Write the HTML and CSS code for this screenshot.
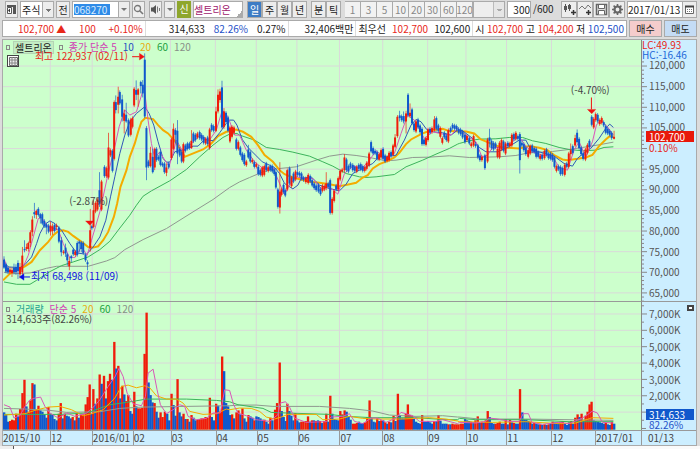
FILE: index.html
```html
<!DOCTYPE html>
<html lang="ko">
<head>
    <meta charset="UTF-8">
    <meta name="viewport" content="width=device-width, initial-scale=1.0">
    <title>셀트리온 차트</title>
    <link rel="stylesheet" href="styles.css">
</head>
<body>

<form class="toolbar">
    <button type="button" class="btn icon" aria-label="패널">
        <svg width="11" height="11" viewBox="0 0 11 11"><path d="M1 1h9v9H7V3H1z" fill="#555"/><path d="M1.500 3.500h4v6h-4z" fill="#fff" stroke="#555"/><path d="M4 4.500v4L2 6.500z" fill="#333"/></svg>
    </button>
    <select class="box market" aria-label="시장"><option>주식</option></select>
    <button type="button" class="btn prev">전</button>
    <span class="combo">
        <input type="text" class="code" aria-label="종목코드" value="068270">
        <button type="button" class="arrow" aria-label="목록"></button>
    </span>
    <button type="button" class="btn icon" aria-label="검색">
        <svg width="11" height="11" viewBox="0 0 11 11"><circle cx="4.500" cy="4.500" r="3" fill="none" stroke="#777" stroke-width="1.300"/><path d="M7 7l3 3" stroke="#777" stroke-width="1.600"/></svg>
    </button>
    <button type="button" class="btn icon sound" aria-label="소리">
        <svg width="11" height="11" viewBox="0 0 11 11"><path d="M1 3.500h2L6 1v9L3 7.500H1z" fill="#555"/><path d="M7.500 2.500v6M9.500 4v3" stroke="#777"/></svg>
    </button>
    <button type="button" class="arrow" aria-label="소리 설정"></button>
    <span class="badge">신</span>
    <input type="text" class="box name" aria-label="종목명" value="셀트리온">
    <span class="group">
        <button type="button" class="btn on">일</button>
        <button type="button" class="btn">주</button>
        <button type="button" class="btn">월</button>
        <button type="button" class="btn">년</button>
    </span>
    <span class="group">
        <button type="button" class="btn">분</button>
        <button type="button" class="btn">틱</button>
    </span>
    <span class="group minutes">
        <button type="button" class="btn">1</button>
        <button type="button" class="btn">3</button>
        <button type="button" class="btn">5</button>
        <button type="button" class="btn">10</button>
        <button type="button" class="btn">20</button>
        <button type="button" class="btn">30</button>
        <button type="button" class="btn">60</button>
        <button type="button" class="btn">120</button>
        <select class="box unit" aria-label="분 단위" disabled><option></option></select>
    </span>
    <input type="text" class="box count" id="count" aria-label="봉 개수" value="300">
    <label class="total" for="count">/600</label>
    <span class="group tools">
        <button type="button" class="btn" aria-label="봉 추가">
            <svg width="13" height="13" viewBox="0 0 13 13"><path d="M2.500 1v8M6.500 1v7" stroke="#555"/><path d="M1 3h3v4H1zM5 2h3v4H5z" fill="#555"/><path d="M8 9.500h5M10.500 7v5" stroke="#333" stroke-width="1.500"/></svg>
        </button>
        <button type="button" class="btn" aria-label="지표 추가">
            <svg width="13" height="13" viewBox="0 0 13 13"><path d="M0 6l3-3 3 3 3-4 3 3" fill="none" stroke="#777"/><path d="M7 9.500h5M9.500 7v5" stroke="#333" stroke-width="1.500"/></svg>
        </button>
        <button type="button" class="btn" aria-label="저장">
            <svg width="13" height="13" viewBox="0 0 13 13"><path d="M1.500 1.500h10v10h-10z" fill="#ddd" stroke="#666" stroke-width="1.500"/><path d="M3.500 2v3.500h6V2M3.500 11.500v-4h6v4" fill="#fff" stroke="#666"/></svg>
        </button>
        <button type="button" class="btn" aria-label="설정">
            <svg width="13" height="13" viewBox="0 0 13 13"><circle cx="6.500" cy="6.500" r="3" fill="none" stroke="#666" stroke-width="2.200"/><path d="M6.500 1v2M6.500 10v2M1 6.500h2M10 6.500h2M2.600 2.600L4 4M9 9l1.400 1.400M2.600 10.400L4 9M9 4l1.400-1.400" stroke="#666" stroke-width="1.600"/></svg>
        </button>
    </span>
    <span class="combo date">
        <input type="text" aria-label="기준일" value="2017/01/13">
        <button type="button" class="btn" aria-label="달력">
            <svg width="11" height="11" viewBox="0 0 11 11"><path d="M1.500 2.500h8v7h-8z" fill="#fff" stroke="#666"/><path d="M1 2.500h9" stroke="#444" stroke-width="2"/><path d="M3 5.500h5M3 7.500h5" stroke="#777" stroke-dasharray="1 1"/></svg>
        </button>
    </span>
</form>

<div class="quote">
    <div class="cells">
        <div class="cell c1"><span class="up">102,700 ▲</span><span class="up">100</span><span class="up">+0.10%</span></div>
        <div class="cell c2"><span>314,633</span><span class="down">82.26%</span><span>0.27%</span></div>
        <div class="cell c3"><span>32,406백만</span></div>
        <div class="cell"><span>최우선</span><span class="up">102,700</span><span>102,600</span></div>
        <div class="cell"><span>시</span><span class="up">102,700</span><span>고</span><span class="up">104,200</span><span>저</span><span class="down">102,500</span></div>
    </div>
    <button type="button" class="order buy">매수</button>
    <button type="button" class="order sell">매도</button>
</div>

<main class="chart">
    <section class="plot">
        <svg id="price" viewBox="9 120 1917 783" preserveAspectRatio="none"></svg>
        <div class="legend">
            <i class="mark"></i><b class="title">셀트리온</b><i class="mark"></i>
            <span class="t5">종가 단순 5</span><span class="t10">10</span><span class="t20">20</span><span class="t60">60</span><span class="t120">120</span>
        </div>
        <button type="button" class="sheet" aria-label="표 보기">
            <svg width="9" height="9" viewBox="0 0 9 9"><path d="M.5.5h8v8h-8z" fill="#eee" stroke="#666"/><path d="M3 0v9M6 0v9M0 3h9M0 6h9" stroke="#888"/></svg>
        </button>
        <span class="note high">최고 122,937 (02/11)</span>
        <span class="note low">최저 68,498 (11/09)</span>
        <span class="note gap1">(-2.87%)</span>
        <span class="note gap2">(-4.70%)</span>
    </section>
    <aside class="axis">
        <svg id="priceTicks" viewBox="0 120 6 783" preserveAspectRatio="none"></svg>
        <ol class="scale price-scale">
            <li>120,000</li><li>115,000</li><li>110,000</li><li>105,000</li><li></li><li>95,000</li>
            <li>90,000</li><li>85,000</li><li>80,000</li><li>75,000</li><li>70,000</li><li>65,000</li>
        </ol>
        <div class="range"><span class="up">LC:49.93</span><span class="hc">HC:-16.46</span></div>
        <div class="tag now"><b>102,700</b><span>0.10%</span></div>
    </aside>

    <section class="plot volume">
        <svg id="volume" viewBox="9 906 1917 384" preserveAspectRatio="none"></svg>
        <div class="legend">
            <i class="mark"></i><span class="vol">거래량</span><span class="t5">단순 5</span><span class="t20">20</span><span class="t60">60</span><span class="t120">120</span>
        </div>
        <span class="note amount">314,633주(82.26%)</span>
    </section>
    <aside class="axis volume">
        <svg id="volumeTicks" viewBox="0 906 6 384" preserveAspectRatio="none"></svg>
        <ol class="scale volume-scale">
            <li>7,000K</li><li>6,000K</li><li>5,000K</li><li>4,000K</li><li>3,000K</li><li>2,000K</li><li>1,000K</li>
        </ol>
        <button type="button" class="max" aria-label="최대화"></button>
        <div class="tag vol-now"><b>314,633</b><span>82.26%</span></div>
    </aside>

    <ol class="months">
        <li>2015/10</li><li>12</li><li>2016/01</li><li>02</li><li>03</li><li>04</li><li>05</li><li>06</li>
        <li>07</li><li>08</li><li>09</li><li>10</li><li>11</li><li>12</li><li>2017/01</li>
    </ol>
    <div class="today">01/13</div>
</main>

<footer class="tabs"><div class="tab"></div></footer>

<script src="chart.js"></script>
</body>
</html>
```

FILE: styles.css
```css
* {
    box-sizing: border-box;
}

body {
    margin: 0;
    height: 100vh;
    display: flex;
    flex-direction: column;
    background-color: #dcdcdc;
    color: #222;
    font-family: "Noto Sans CJK KR", sans-serif;
    font-size: 10px;
    line-height: 12px;
}

button, input, select {
    margin: 0;
    padding: 0;
    border: 1px solid #aaa;
    border-radius: 0;
    background-color: #fff;
    color: #222;
    font: inherit;
    line-height: 12px;
}

ol {
    list-style: none;
    margin: 0;
    padding: 0;
}

svg {
    display: block;
}

.up {
    color: #e8281a;
}

.down {
    color: #2450c8;
}

/* toolbar */
.toolbar {
    display: flex;
    align-items: stretch;
    height: 18px;
    padding: 1px 3px 0 5px;
    gap: 2px;
}

.btn {
    display: flex;
    align-items: center;
    justify-content: center;
    background-color: #ededed;
}

.icon {
    width: 13px;
}

.sound {
    margin-left: 2px;
}

.box {
    background-color: #fff;
}

.market {
    width: 34px;
    appearance: none;
    padding-left: 1px;
    background: linear-gradient(#777, #777) 25px 7px / 5px 1px no-repeat, linear-gradient(#777, #777) 26px 8px / 3px 1px no-repeat, linear-gradient(#777, #777) 27px 9px / 1px 1px no-repeat, linear-gradient(90deg, #fff 21px, #aaa 21px, #aaa 22px, #ededed 22px);
}

.prev {
    width: 14px;
}

.combo {
    display: flex;
    border: 1px solid #aaa;
    background-color: #fff;
}

.combo input {
    border: 0;
    min-width: 0;
}

.code {
    width: 36px;
    margin: 2px 8px 2px 1px;
    background-color: #2f8be8;
    color: #d8ecff;
}

.arrow {
    width: 11px;
    border-width: 1px;
    background-color: #ededed;
    display: flex;
    align-items: center;
    justify-content: center;
}

.arrow::after {
    content: "";
    border: 3px solid transparent;
    border-top-color: #777;
    border-bottom: 0;
}

.combo .arrow {
    border-width: 0 0 0 1px;
}

.badge {
    width: 14px;
    background-color: #8ea62c;
    color: #fff;
    text-align: center;
    line-height: 16px;
}

.name {
    flex: 1;
    min-width: 40px;
    color: #a0206e;
    background: linear-gradient(135deg, transparent 50%, #aaa 50%) right bottom / 6px 6px no-repeat, #fff;
}

.group {
    display: flex;
    margin-left: 2px;
}

.group .btn {
    width: 15px;
}

.group .on {
    background-color: #3d7cc4;
    color: #fff;
}

.minutes .btn, .tools .btn {
    width: 16px;
}

.minutes .btn {
    color: #888;
    background-color: #f2f2f2;
    border-left-width: 0;
    overflow: hidden;
}

.unit {
    width: 32px;
    appearance: none;
    opacity: 1;
    background: linear-gradient(#aaa, #aaa) 23px 7px / 5px 1px no-repeat, linear-gradient(#aaa, #aaa) 24px 8px / 3px 1px no-repeat, linear-gradient(90deg, #eee 19px, #bbb 19px, #bbb 20px, #e6e6e6 20px);
}

.count {
    width: 24px;
    text-align: right;
}

.total {
    width: 24px;
    line-height: 16px;
}

.date input {
    width: 54px;
}

.date .btn {
    width: 14px;
    border-width: 0 0 0 1px;
}

/* quote line */
.quote {
    display: flex;
    height: 19px;
    margin: 1px 3px 1px 2px;
    padding: 1px 0;
    gap: 2px;
}

.cells {
    flex: 1;
    display: grid;
    grid-template-columns: 142fr 143fr 68fr 117fr 154fr;
    background-color: #fff;
    border: 1px solid #aaa;
}

.cell {
    display: flex;
    align-items: center;
    justify-content: space-between;
    white-space: nowrap;
    border-left: 1px solid #ddd;
    padding: 0 2px;
    min-width: 0;
}

.c1 {
    border-left: 0;
    padding-left: 15px;
}

.c2 {
    padding-left: 23px;
}

.c3 {
    justify-content: flex-end;
}

.order {
    width: 33px;
}

.buy {
    background-color: #f5cccc;
}

.sell {
    background-color: #c4dcf5;
}

/* chart */
.chart {
    flex: 1;
    min-height: 0;
    display: grid;
    grid-template-columns: minmax(0, 1fr) 55px;
    grid-template-rows: minmax(0, 262fr) minmax(0, 129fr) 15px;
    margin: 0 3px 0 2px;
    border: 1px solid #aaa;
}

.plot {
    position: relative;
    overflow: hidden;
    background-color: #ccffcc;
}

.plot > svg {
    width: 100%;
    height: 100%;
}

.volume {
    border-top: 1px solid #999;
}

.axis {
    position: relative;
    display: flex;
    gap: 1px;
    background-color: #cceeff;
    border-left: 1px solid #888;
    color: #555;
}

.axis > svg {
    width: 6px;
    height: 100%;
    stroke: #888;
}

.scale {
    flex: 1;
    display: flex;
    flex-direction: column;
}

.scale li {
    flex: 1;
    min-height: 0;
    display: flex;
    align-items: center;
}

.price-scale {
    margin: 15px 0 -2px;
}

.volume-scale {
    margin: 3px 0 9px;
}

.grid {
    stroke: #d9d9d9;
}

.grid, .line {
    fill: none;
    vector-effect: non-scaling-stroke;
}

.r {
    fill: #f01c0a;
}

.b {
    fill: #1058cc;
}

.m5 {
    stroke: #d858b8;
}

.m10 {
    stroke: #3058b8;
}

.m20 {
    stroke: #f4ac00;
    stroke-width: 2px;
}

.thin {
    stroke-width: 1px;
}

.m60 {
    stroke: #3cb45c;
}

.m120 {
    stroke: #909890;
}

.arrows {
    fill: #f01010;
    stroke: #f01010;
}

.arrows .low-arrow {
    fill: #0808e8;
    stroke: #0808e8;
}

.legend {
    position: absolute;
    top: 0;
    left: 3px;
    display: flex;
    align-items: center;
    gap: 6px;
    height: 14px;
    white-space: nowrap;
}

.mark {
    width: 4px;
    height: 5px;
    border: 1px solid #888;
}

.title {
    font-weight: normal;
    background-color: #c4ecc4;
    border: 1px solid #b4d4b4;
    padding: 0 1px;
    margin: 0 -1px 0 -3px;
    line-height: 11px;
}

.t5 {
    color: #d040b4;
}

.t10 {
    color: #2450c0;
}

.t20 {
    color: #e8ac10;
}

.t60 {
    color: #1ca040;
}

.t120 {
    color: #889088;
}

.vol {
    color: #28a090;
}

.sheet {
    position: absolute;
    top: 15px;
    left: 4px;
    width: 12px;
    height: 12px;
    display: flex;
    align-items: center;
    justify-content: center;
    border-color: #444;
}

.note {
    position: absolute;
    white-space: nowrap;
    color: #444;
}

.high {
    left: 5%;
    top: 4%;
    color: #e8281a;
}

.low {
    left: 4.4%;
    top: 88%;
    color: #1010e0;
}

.gap1 {
    left: 10.4%;
    top: 59.5%;
}

.gap2 {
    left: 89%;
    top: 17%;
}

.amount {
    top: 11px;
    left: 3px;
}

.range {
    position: absolute;
    top: 0;
    left: 0;
    display: flex;
    flex-direction: column;
    line-height: 10px;
    background-color: #cceeff;
}

.hc {
    color: #2068d8;
}

.tag {
    position: absolute;
    left: 4px;
    right: 2px;
    display: flex;
    flex-direction: column;
    line-height: 11px;
}

.tag b {
    font-weight: normal;
    color: #fff;
    padding-left: 3px;
}

.tag span {
    padding-left: 3px;
}

.now {
    top: 35%;
    color: #e8281a;
}

.now b {
    background-color: #e8180a;
}

.vol-now {
    bottom: 0;
    color: #2450c8;
}

.vol-now b {
    background-color: #1058cc;
}

.vol-now span {
    background-color: #cceeff;
    line-height: 10px;
}

.max {
    position: absolute;
    top: 3px;
    right: 2px;
    width: 7px;
    height: 6px;
    border: 2px solid #444;
}

.months {
    display: grid;
    grid-template-columns: 47fr 42fr 41fr 38fr 45fr 41fr 41fr 42fr 43fr 45fr 39fr 40fr 45fr 44fr 46fr;
}

.months li, .today {
    min-width: 0;
    background-color: #cceeff;
    border-left: 1px solid #999;
    border-top: 1px solid #999;
    line-height: 13px;
    white-space: nowrap;
    color: #444;
}

.months li:first-child {
    border-left: 0;
}

.today {
    padding-left: 6px;
}

/* top edge of the tab strip under the chart */
.tabs {
    height: 3px;
    padding-left: 13px;
    background-color: #eee;
}

.tab {
    height: 3px;
    background-color: #fafafa;
    border-left: 1px solid #555;
}
```

FILE: chart.js
```js
const NS = 'http://www.w3.org/2000/svg';

// colour, x, body top, body bottom [, high, low], grouped by the origin of each stretch
const candles = [
    [0, 240, `b 12 538 562 528 566,b 18 552 574,b 24 562 576,r 30 568 576 560 582,r 36 570 578 562 590,b 42 562 576 550 582,
    b 48 560 576 552 584,b 54 548 572 540 596,r 60 560 582 548 594,r 67 526 576 500 585,b 74 506 510 480 516,r 80 500 506 490 512,
    r 85 488 506 484 514,r 91 456 488 450 500,r 97 418 456 408 468,b 103 396 402 368 414,r 109 392 404 388 416,b 115 386 404,
    b 121 402 414 398 430,b 127 402 430,b 133 422 438,b 139 432 442 428 462,b 146 436 454,r 152 436 454 424 466,r 158 438 452 430 464,
    b 164 434 452,r 170 436 440 430 450,b 177 442 484,b 184 480 516 470 528,r 191 514 518,b 197 502 520 490 530,b 202 522 540 518 556,
    r 208 542 558 530 570,b 214 528 534 524 545,b 220 508 522,r 226 514 524,b 232 488 524,b 238 484 490 480 516,b 244 486 506 482 516,
    b 250 488 518,b 257 524 540,b 263 546 552 540 570,r 271 450 504 386 514,b 276 438 444,r 281 390 440 360 444,r 287 368 394,
    r 293 358 388,b 299 330 372 276 380,r 305 304 388,b 314 260 288,r 320 264 288,r 326 202 292 158 298,r 332 210 226,b 338 212 272,
    r 343 66 236,b 348 66 90 46 100,r 355 50 74 20 100,b 360 36 70,b 367 58 110 44 124,r 373 100 122 88 160,b 379 104 124 68 128,
    b 386 120 166,r 393 118 164,r 398 114 140,r 403 26 76,b 409 30 44 1 60,r 415 28 44 24 80,b 423 6 18 2 40,b 429 14 40 0 52,
    b 435 -61 109 -80 114,b 440 144 262 138 300,b 446 244 258,r 452 218 258 200 262,b 459 230 276 206 280,r 465 206 262 202 270,
    b 470 206 240,b 476 230 238,b 482 216 254,b 488 250 256,b 494 250 276,r 500 262 278 250 288,b 507 250 262,r 515 178 234,
    r 521 146 206 130 210,b 527 150 164 144 190,b 533 152 220 120 252,b 540 206 226,b 546 216 244,r 551 192 244,b 557 196 212,
    b 563 190 206,b 569 190 204,r 575 182 204 150 206,b 581 160 184,b 587 164 180,r 593 160 172,b 600 156 174,b 606 164 178,
    b 612 170 188,r 618 176 190,b 624 172 192,r 630 148 204,b 636 134 150,b 642 138 152,r 649 94 152 80 156,r 655 44 94 28 100,
    r 661 34 60 26 68,b 667 22 142 2 146,r 673 94 140 84 146,b 679 98 126,b 685 112 152,r 691 142 184,r 697 140 170,r 703 142 158`],
    [690, 180, `b 20 238 266,r 26 246 266,b 32 262 284,b 38 280 300,b 44 284 312,r 50 304 315,b 56 268 292 254 296,b 62 276 304,
    r 68 300 306,b 74 306 320,r 80 312 320,b 86 320 342,b 92 330 344,r 98 322 346,r 104 318 344,b 110 310 330,r 116 322 332,
    b 122 318 330,b 128 318 334,b 134 328 342,b 139 336 382,b 145 388 440,r 151 394 442 306 460,r 156 388 404,b 162 374 396,
    b 167 390 406,r 173 330 388,b 180 324 370,r 186 352 378,b 192 340 364,r 198 334 358,b 204 336 344 312 350,b 210 338 346,
    b 216 340 356,b 222 352 360,r 229 354 366,r 236 344 368,b 242 348 364,b 248 360 376,b 254 370 384,b 260 376 390,b 267 374 394,
    b 273 386 402,r 279 376 392,r 285 378 388,r 290 370 384 336 390,b 296 370 380,b 302 360 458,r 308 416 458,r 314 392 422,
    b 320 376 388,r 326 354 388,r 332 332 358,r 338 328 334,r 345 292 330 282 336,b 351 298 330,b 357 318 334,b 363 310 322,
    b 370 314 330,b 376 320 332,r 382 320 334,b 388 314 326,b 394 312 328,b 400 318 332,r 406 322 332,r 412 308 326,r 419 280 316,
    b 425 246 274,b 431 264 280,b 437 272 280,b 443 276 296,r 449 282 298,r 455 270 292,b 461 266 296,b 467 286 304,r 473 290 302,
    r 479 278 300,b 485 276 288,r 491 256 284,r 497 232 260 222 264,r 504 170 228,b 511 166 174 152 184,b 517 168 180,
    b 523 168 184 154 190,r 530 160 184 152 220,b 536 104 166,r 542 158 168 130 174,b 548 148 190,b 554 190 210,r 560 184 214,
    b 566 178 202,b 572 196 216,b 578 206 252,b 584 238 252,r 590 234 254,r 596 208 240,b 602 206 218,r 608 204 216,
    r 615 178 210 168 214,b 621 174 206,b 627 196 212,r 633 204 230,r 639 234 248,b 645 218 232,b 651 226 240,r 657 210 244,
    b 664 204 214,b 670 194 204,b 676 196 206,b 682 198 208,b 688 206 218`],
    [1380, 180, `b 4 208 222,b 10 214 232,b 17 224 246,r 23 228 240,b 30 234 250,r 36 250 258,r 43 228 256,b 49 252 258,b 56 256 292,
    b 62 286 300,r 68 290 300,b 77 286 324,r 85 238 304,b 91 232 242 206 262,b 97 242 264,b 103 248 268,b 109 250 262,r 115 266 290,
    r 121 248 292,r 127 240 268,b 133 244 272,r 139 250 280,b 146 248 258,r 152 250 258,r 158 224 256,b 164 222 238,r 170 218 236,
    b 176 228 236,b 182 222 300 216 340,b 188 248 256,b 194 252 270,b 200 262 282,r 207 270 290,r 213 258 280,b 219 256 274,
    b 225 264 276,b 231 266 290,b 237 276 290,r 243 286 296,b 249 284 296,r 256 272 294,b 262 268 284,b 268 280 294,b 274 280 296,
    b 280 284 300,b 286 292 320,r 292 318 332,b 298 318 328,b 304 320 342,b 310 324 342,r 317 314 344,b 323 310 320,r 329 280 320,
    r 335 270 282 250 300,b 341 258 278,r 348 234 256 224 260,b 354 218 246 208 250,b 360 236 264,b 366 262 282,b 372 280 296,
    r 379 268 298,r 385 254 278,b 391 242 260,b 398 170 194,r 404 176 202,r 410 162 180,b 416 164 184,r 422 180 192,r 428 174 188,
    b 434 186 196,b 440 198 218,b 446 206 220,b 452 212 224,b 458 218 234,r 465 230 236 212 238`]
];

// colour, x, bar top
const volumes = [
    [0, 870, `b 12 368,b 18 376,b 24 396,r 30 394,r 36 390,r 42 392,r 48 372,b 54 378,r 60 358,r 67 310,r 73 270,b 79 350,r 85 366,
    r 91 332,r 97 280,b 103 284,r 109 360,r 115 348,b 121 362,b 127 366,b 133 374,b 139 384,r 145 352,b 151 372,b 157 374,b 163 388,
    b 170 392,r 176 372,r 182 340,b 188 386,r 194 372,b 200 378,b 206 380,b 212 386,r 218 382,b 224 392,r 230 370,b 236 384,r 243 376,
    r 249 374,r 257 344,r 263 322,r 269 284,b 275 372,r 280 298,b 286 342,r 292 326,r 299 254,b 305 282,r 312 258,b 318 326,r 324 274,
    r 330 252,b 336 270,r 343 156,b 349 236,r 355 228,b 361 326,r 367 288,b 373 314,r 379 334,r 385 316,b 391 364,b 397 372,r 403 306,
    b 409 350,r 415 356,r 421 356,r 427 354,r 434 192,r 440 68,b 446 278,b 452 316,b 458 338,r 464 340,b 470 366,b 476 384,r 482 368,
    r 488 382,r 495 366,b 502 372,b 508 392,r 515 312,b 521 346,b 527 378,r 533 268,b 539 368,b 545 380,r 551 372,b 557 388,r 563 388,
    b 569 396,r 575 376,b 581 384,b 587 392,r 593 390,r 599 388,r 605 386,r 611 386,r 617 382,r 623 384,r 630 324,b 636 382,b 642 392,
    r 649 342,b 655 348,r 661 366,r 667 200,b 673 244,b 679 340,b 685 350,b 691 376,r 697 374,b 703 386`],
    [690, 870, `r 20 368,r 26 362,b 32 374,r 38 356,b 44 386,b 50 396,r 56 376,b 62 380,b 68 384,r 74 392,b 80 380,b 86 382,b 92 386,
    b 98 390,r 104 390,b 110 396,b 116 402,r 122 384,b 128 392,r 136 360,r 142 340,r 150 218,b 156 364,b 162 382,b 168 394,r 173 342,
    b 179 364,b 185 378,b 191 392,r 197 370,b 203 392,b 209 398,r 215 396,r 221 396,r 228 394,r 235 380,b 241 396,r 247 392,b 253 392,
    r 259 394,b 265 392,r 271 394,b 277 400,r 284 394,r 290 372,b 296 396,r 302 318,b 308 372,b 314 388,b 320 390,b 326 392,r 332 364,
    r 338 374,r 345 362,b 351 366,b 357 380,b 363 390,r 370 402,r 376 402,r 382 400,b 388 396,b 394 400,b 400 400,r 406 398,r 413 382,
    r 420 332,b 426 384,b 432 396,b 438 398,r 443 386,b 449 394,r 455 392,b 461 392,r 467 398,b 473 402,r 479 396,b 485 398,r 492 378,
    b 498 394,r 505 312,b 511 376,b 517 386,b 523 386,r 529 372,r 535 344,r 541 376,r 547 378,b 553 386,b 560 396,b 566 400,b 572 402,
    r 578 376,b 584 396,b 590 396,b 596 394,b 602 398,b 608 402,r 614 394,b 621 394,r 627 376,b 633 394,b 639 402,b 645 402,b 651 402,
    r 657 404,b 663 404,r 669 402,r 675 404,r 681 404,r 687 404`],
    [1380, 870, `r 4 402,r 10 402,b 17 388,b 23 392,b 29 394,r 35 396,b 42 398,r 48 392,r 55 380,b 61 400,r 67 396,b 73 398,r 79 392,
    r 85 364,b 91 382,b 97 400,b 103 402,r 109 402,r 115 400,r 121 396,b 127 402,b 133 402,r 139 388,b 145 404,r 152 390,b 158 398,
    r 164 400,b 170 402,b 176 402,r 182 298,b 189 368,b 195 390,b 201 390,b 207 394,r 213 396,b 219 402,r 225 400,b 231 402,b 237 404,
    r 243 404,b 249 406,r 256 404,b 262 406,r 268 404,b 274 400,r 280 396,b 286 398,b 292 398,b 298 400,r 304 396,r 310 394,b 317 402,
    b 323 406,b 329 398,r 335 394,b 341 402,r 348 384,r 355 374,b 361 382,r 367 372,b 373 392,r 379 378,r 385 366,r 391 344,r 397 336,
    b 403 392,b 409 394,b 416 396,b 422 398,b 428 400,b 434 402,r 440 400,b 446 404,b 452 406,r 458 396,b 465 402`]
];

// moving averages, same origins as above
const priceLines = {
    m120: [
        '12,576 40,580 90,578 140,564 170,558 265,558 320,542 345,532 375,508 430,478 500,445 580,395 640,358 690,322',
        '30,365 60,352 100,335 140,326 200,320 260,300 300,288 340,282 380,286 420,292 470,302 500,300 550,292 600,291 660,287',
        '30,292 120,290 170,286 210,278 280,274 330,268 370,262 420,254 463,246'
    ],
    m60: [
        '12,605 50,612 90,612 110,600 150,574 185,556 220,545 265,530 300,508 330,483 355,450 390,405 410,375 430,348 455,332 510,302 560,268 600,230 640,195 670,172 690,162 712,160',
        '30,225 75,240 110,262 150,268 190,276 240,288 280,305 310,318 350,340 390,350 410,352 440,350 495,343 530,320 580,300 620,282 660,265 685,252',
        '0,250 30,242 60,237 110,236 150,232 190,232 220,242 260,250 300,262 330,268 370,272 410,270 435,262 463,260'
    ],
    m20: [
        '9,600 30,580 75,558 95,545 120,510 145,485 160,465 175,453 190,450 205,455 220,467 245,485 265,500 280,502 295,498 310,480 325,455 342,410 352,370 362,320 380,270 390,230 405,190 415,155 425,125 437,113 460,117 475,135 490,150 505,160 525,182 540,205 555,230 575,222 610,208 635,190 655,168 680,155 700,150',
        '20,208 40,215 65,230 85,255 105,285 130,305 150,330 165,342 190,352 215,358 240,365 270,368 300,372 330,378 360,372 380,368 400,352 415,345 430,325 450,312 475,302 495,292 510,278 530,252 545,238 575,222 600,212 640,206 660,213',
        '20,214 45,220 65,238 85,246 105,255 130,262 180,265 210,258 240,263 265,270 285,285 310,298 325,300 355,296 380,292 400,284 420,258 440,238 452,228 463,230'
    ],
    m10: [
        '12,545 25,560 60,562 75,553 95,530 110,490 120,460 135,432 150,422 165,430 185,450 210,490 230,518 260,522 280,500 300,470 318,420 332,350 345,290 360,220 375,165 390,125 410,100 435,80 448,100 462,135 475,185 490,235 500,246 510,246 525,215 555,208 580,198 595,198 615,178 640,182 660,158 680,130',
        '0,180 12,180 22,195 38,238 55,262 78,285 98,305 135,322 150,340 165,370 190,386 205,375 215,355 245,350 270,375 300,385 330,392 350,372 370,340 400,325 430,310 450,288 470,290 500,285 525,240 545,195 560,178 575,185 592,208 612,215 640,218 665,225 685,210',
        '10,212 40,235 60,262 80,275 115,275 145,262 180,240 200,240 215,268 240,275 285,288 315,310 340,318 355,295 370,282 395,265 420,235 440,205 452,192 463,202'
    ],
    m5: [
        '12,535 25,570 60,572 75,548 85,525 100,470 115,415 125,412 145,440 175,448 190,490 208,530 225,532 245,500 262,525 275,480 300,395 325,280 345,200 358,140 375,90 390,105 410,95 433,20 445,120 455,190 465,235 480,215 495,240 508,258 520,220 530,180 550,215 575,190 600,165 628,182 650,150 668,90 685,110 705,165',
        '30,225 50,270 75,305 100,325 130,322 150,370 165,402 180,375 200,350 225,355 250,355 275,385 300,380 325,402 345,340 370,318 400,322 420,300 440,272 470,295 495,280 515,220 535,165 555,180 585,235 610,215 640,222 665,225 685,205',
        '20,225 50,245 68,290 85,285 100,262 130,262 160,245 180,230 200,258 220,275 250,285 280,288 300,322 325,330 345,270 360,245 380,290 400,245 412,195 425,180 445,200 463,225'
    ]
};

const volumeLines = {
    m120: [
        '12,356 75,358 150,362 200,368 300,366 360,356 430,352 560,350 690,348',
        '30,346 80,346 130,350 270,350 360,356 430,364 480,376 560,380 640,378 685,382',
        '0,382 60,388 200,388 463,392'
    ],
    m60: [
        '12,374 180,374 260,370 330,345 380,338 440,328 560,328 650,332 690,336',
        '25,345 100,356 125,368 175,370 300,374 350,380 430,384 560,384 650,390 685,390',
        '0,386 50,390 200,390 330,396 463,396'
    ],
    m20: [
        '12,376 75,372 105,362 145,352 180,350 215,360 250,378 275,372 310,360 345,325 365,290 385,286 410,294 435,288 450,294 470,318 500,328 530,328 550,340 570,365 610,374 650,372 680,358',
        '0,360 30,355 65,356 90,365 110,382 135,388 155,382 175,374 260,374 280,390 330,388 360,380 400,386 440,388 520,388 600,384 650,388 685,394',
        '0,396 100,398 200,396 300,402 350,400 400,384 463,386'
    ],
    m5: [
        '12,345 30,352 42,385 60,378 75,350 90,330 105,325 122,322 135,350 150,370 175,385 200,370 225,380 260,370 285,348 300,330 325,290 345,262 358,235 370,260 382,310 400,342 425,348 437,320 445,250 460,238 472,300 482,345 500,372 520,360 540,345 555,350 565,380 590,390 620,386 640,370 662,370 675,300 690,302',
        '12,345 25,370 50,378 80,390 120,395 145,375 152,340 168,336 180,352 195,385 230,398 290,396 305,382 340,380 360,372 375,395 400,402 425,385 445,385 470,398 500,385 515,368 550,378 570,395 620,395 640,390 685,402',
        '0,398 50,400 80,395 90,385 115,388 150,395 180,395 192,372 208,372 218,398 250,404 300,398 330,402 370,385 385,375 400,364 415,370 430,398 463,400'
    ]
};

const months = [151, 277, 400, 512, 647, 770, 892, 1020, 1150, 1285, 1400, 1522, 1657, 1787];

function draw(parent, tag, attrs) {
    const el = document.createElementNS(NS, tag);
    for (const key in attrs) el.setAttribute(key, attrs[key]);
    parent.appendChild(el);
    return el;
}

function drawGrid(svg, top, bottom, rows) {
    let d = months.map(x => `M${x} ${top}V${bottom}`).join('');
    d += rows.map(y => `M9 ${y}H1926`).join('');
    draw(svg, 'path', { class: 'grid', d: d });
}

function drawLines(svg, lines, origins, extra) {
    for (const name in lines) {
        const points = lines[name].map((part, i) => part.split(' ').map(p => {
            const [x, y] = p.split(',').map(Number);
            return `${x + origins[i][0]},${y + origins[i][1]}`;
        }).join(' ')).join(' ');
        draw(svg, 'polyline', { class: `line ${name} ${extra}`, points: points });
    }
}

function eachRow(groups, fn) {
    groups.forEach(([dx, dy, rows]) => rows.split(',').forEach(row => {
        const [color, x, ...ys] = row.trim().split(' ');
        fn(color, Number(x) + dx, ys.map(y => Number(y) + dy));
    }));
}

const price = document.getElementById('price');
const priceRows = [];
for (let i = 0; i < 12; i++) priceRows.push(198 + i * 61.8);
drawGrid(price, 120, 903, priceRows);
drawLines(price, priceLines, candles, '');
eachRow(candles, (color, x, [top, bottom, high = top - 5, low = bottom + 5]) => {
    draw(price, 'rect', { class: color, x: x - 1, y: high, width: 2, height: low - high });
    draw(price, 'rect', { class: color, x: x - 3, y: top, width: 6, height: bottom - top });
});

const arrows = draw(price, 'g', { class: 'arrows' });
draw(arrows, 'path', { d: 'M397 170h22', 'stroke-width': 3 });
draw(arrows, 'path', { d: 'M419 160l15 10-15 10z' });
draw(arrows, 'path', { d: 'M257 662h25l-12 13z' });
draw(arrows, 'path', { d: 'M1777 292v36', 'stroke-width': 3 });
draw(arrows, 'path', { d: 'M1765 328h25l-12 13z' });
draw(arrows, 'path', { class: 'low-arrow', d: 'M58 830l14-10v20z' });
draw(arrows, 'path', { class: 'low-arrow', d: 'M72 830h18', 'stroke-width': 3 });

const volume = document.getElementById('volume');
const volumeRows = [];
for (let i = 0; i < 7; i++) volumeRows.push(942 + i * 49.2);
drawGrid(volume, 906, 1290, volumeRows);
eachRow(volumes, (color, x, [top]) => {
    draw(volume, 'rect', { class: color, x: x - 3, y: top, width: 7, height: 1290 - top });
});
drawLines(volume, volumeLines, volumes, 'thin');

// scale ticks, a long one at each label
function drawTicks(id, first, step, count, bottom) {
    const svg = document.getElementById(id);
    for (let i = -4; i < count; i++) {
        const y = first + i * step;
        if (y > bottom) break;
        draw(svg, 'path', { class: 'line', d: `M0 ${y}H${i % (id === 'priceTicks' ? 5 : 2) === 0 ? 5 : 2}` });
    }
}
drawTicks('priceTicks', 198, 12.36, 60, 903);
drawTicks('volumeTicks', 942, 24.6, 16, 1290);
```
